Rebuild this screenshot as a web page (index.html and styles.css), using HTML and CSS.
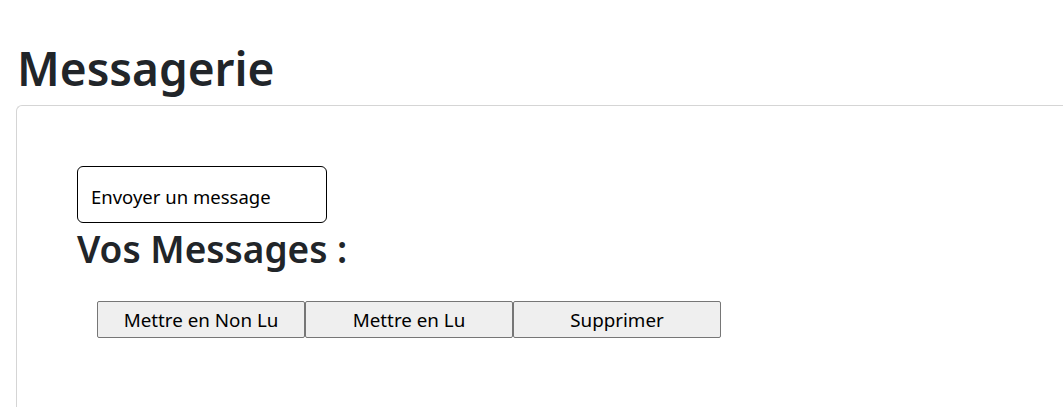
FILE: index.html
```html
<!DOCTYPE html>
<html lang="fr">
<head>
<meta charset="utf-8">
<title>Messagerie</title>
<link rel="stylesheet" href="styles.css">
</head>
<body>
<main class="page">
  <h1 class="title">Messagerie</h1>
  <section class="card">
    <button class="send">Envoyer un message</button>
    <h2 class="subtitle">Vos Messages :</h2>
    <div class="actions">
      <button class="action">Mettre en Non Lu</button>
      <button class="action">Mettre en Lu</button>
      <button class="action">Supprimer</button>
    </div>
  </section>
</main>
</body>
</html>
```

FILE: styles.css
```css
html, body {
  margin: 0;
  padding: 0;
  background: #fff;
  overflow: hidden;
}
body {
  font-family: "Noto Sans", "Open Sans", sans-serif;
  color: #212529;
}
.page {
  padding: 0 0 0 16px;
}
.title {
  margin: 0;
  padding: 36px 0 0 1px;
  font-size: 46px;
  font-weight: 600;
  line-height: 64px;
  height: 69px;
}
.card {
  width: 1100px;
  border: 1px solid #d5d5d5;
  border-right: none;
  border-radius: 6px 0 0 0;
  padding: 60px 0 80px 60px;
  box-sizing: border-box;
}
.send {
  display: block;
  width: 250px;
  height: 57px;
  background: #fff;
  border: 1px solid #000;
  border-radius: 6px;
  font-family: inherit;
  font-size: 18.5px;
  color: #000;
  text-align: left;
  padding: 4px 0 0 13px;
}
.subtitle {
  margin: 0;
  font-size: 37px;
  font-weight: 600;
  line-height: 52px;
  height: 78px;
}
.actions {
  display: flex;
  padding-left: 20px;
}
.action {
  width: 208px;
  height: 37px;
  background: #efefef;
  border: 1px solid #767676;
  border-radius: 2px;
  font-family: inherit;
  font-size: 18.8px;
  color: #000;
  padding: 0;
}
```
